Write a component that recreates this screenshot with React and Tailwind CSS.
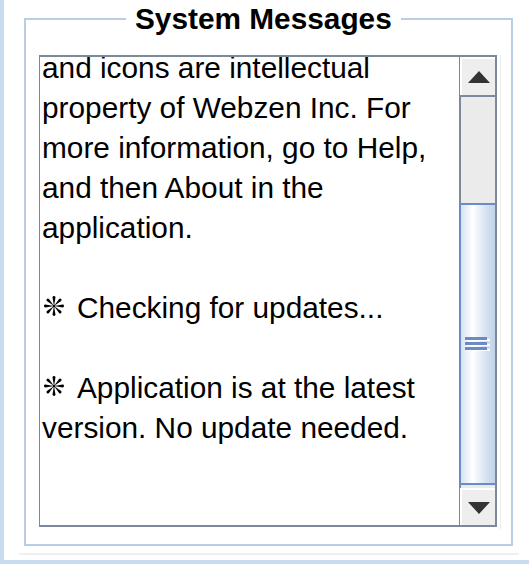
import React from "react";

function Star() {
  const angles = [0, 45, 90, 135, 180, 225, 270, 315];
  return (
    <svg
      width="22"
      height="22"
      viewBox="-11 -11 22 22"
      className="inline-block align-[1px] ml-[1px] mr-[12px]"
      aria-hidden="true"
    >
      {angles.map((a) => (
        <path
          key={a}
          d="M -0.3 -1.6 L -1.45 -8.6 A 1.45 1.45 0 0 1 1.45 -8.6 L 0.3 -1.6 Z"
          fill="#000"
          transform={`rotate(${a})`}
        />
      ))}
      <circle cx="0" cy="0" r="1.5" fill="#000" />
    </svg>
  );
}

const lines = [
  ["and icons are intellectual"],
  ["property of Webzen Inc. For"],
  ["more information, go to Help,"],
  ["and then About in the"],
  ["application."],
  [""],
  ["Checking for updates...", true],
  [""],
  ["Application is at the latest", true],
  ["version. No update needed."],
];

function Grip() {
  return (
    <svg width="26" height="15" viewBox="0 0 26 15">
      {[0, 5, 10].map((y) => (
        <g key={y}>
          <rect x="2" y={y + 2} width="23" height="2" fill="#ffffff" />
          <rect x="0" y={y} width="22" height="3" fill="#6b8bc6" />
        </g>
      ))}
    </svg>
  );
}

export default function App() {
  return (
    <div className="w-[529px] h-[564px] bg-white border-l-4 border-b-4 border-[#c8dcf0] overflow-hidden font-['Liberation_Sans',Arial,'DejaVu_Sans',sans-serif] text-black">
      <div className="pt-[18px] pl-[20px]">
        <div className="relative w-[489px] h-[528px] border-2 border-[#b8cee4] pt-[35px] pl-[13px]">
          <div className="absolute left-[100px] top-[-18px] bg-white px-[9px] text-[29.8px] leading-[34px] font-bold whitespace-nowrap">
            System Messages
          </div>
          <div className="flex w-[462px] h-[475px] border-r border-[#ececec]">
            <div className="flex w-[458px] h-[472px] border-t-2 border-l border-b-2 border-r-2 border-[#7a8a9a]">
              <div className="flex-1 overflow-hidden pl-[2px]">
                <div className="-mt-[9px] text-[29.8px] leading-[40px] whitespace-nowrap">
                  {lines.map(([t, star], i) => (
                    <div key={i} className="h-[40px]">
                      {star ? <Star /> : null}
                      {t}
                    </div>
                  ))}
                </div>
              </div>
              <div className="w-[36px] flex flex-col bg-[#ebebeb]">
                <div className="h-[40px] flex items-center justify-center bg-[#eeeeee] border-l border-[#7a8a9a] border-b-2 border-b-[#7a8a9a]">
                  <div className="w-full h-full flex items-center justify-center border-t-2 border-l-2 border-white">
                    <svg width="22" height="12" viewBox="0 0 22 12">
                      <polygon points="11,0 22,12 0,12" fill="#333333" />
                    </svg>
                  </div>
                </div>
                <div className="h-[106px] border-l-2 border-[#7a8a9a] bg-[#ebebeb]" />
                <div className="h-[282px] border-l-2 border-t-2 border-b-2 border-[#6b8bc6] bg-[linear-gradient(to_right,#d6e3f2_0%,#ffffff_35%,#d8e5f3_70%,#bfd2e8_100%)] flex items-center justify-center">
                  <Grip />
                </div>
                <div className="h-[3px] border-l-2 border-[#7a8a9a] bg-[#ebebeb]" />
                <div className="flex-1 flex bg-[#eeeeee] border-l border-[#7a8a9a]">
                  <div className="w-full h-full flex items-center justify-center border-t-2 border-l-2 border-white">
                    <svg width="22" height="12" viewBox="0 0 22 12">
                      <polygon points="0,0 22,0 11,12" fill="#333333" />
                    </svg>
                  </div>
                </div>
              </div>
            </div>
          </div>
        </div>
        <div className="mt-[7px] -ml-[5px] w-[500px] h-[2px] bg-[#efefef]" />
      </div>
    </div>
  );
}
